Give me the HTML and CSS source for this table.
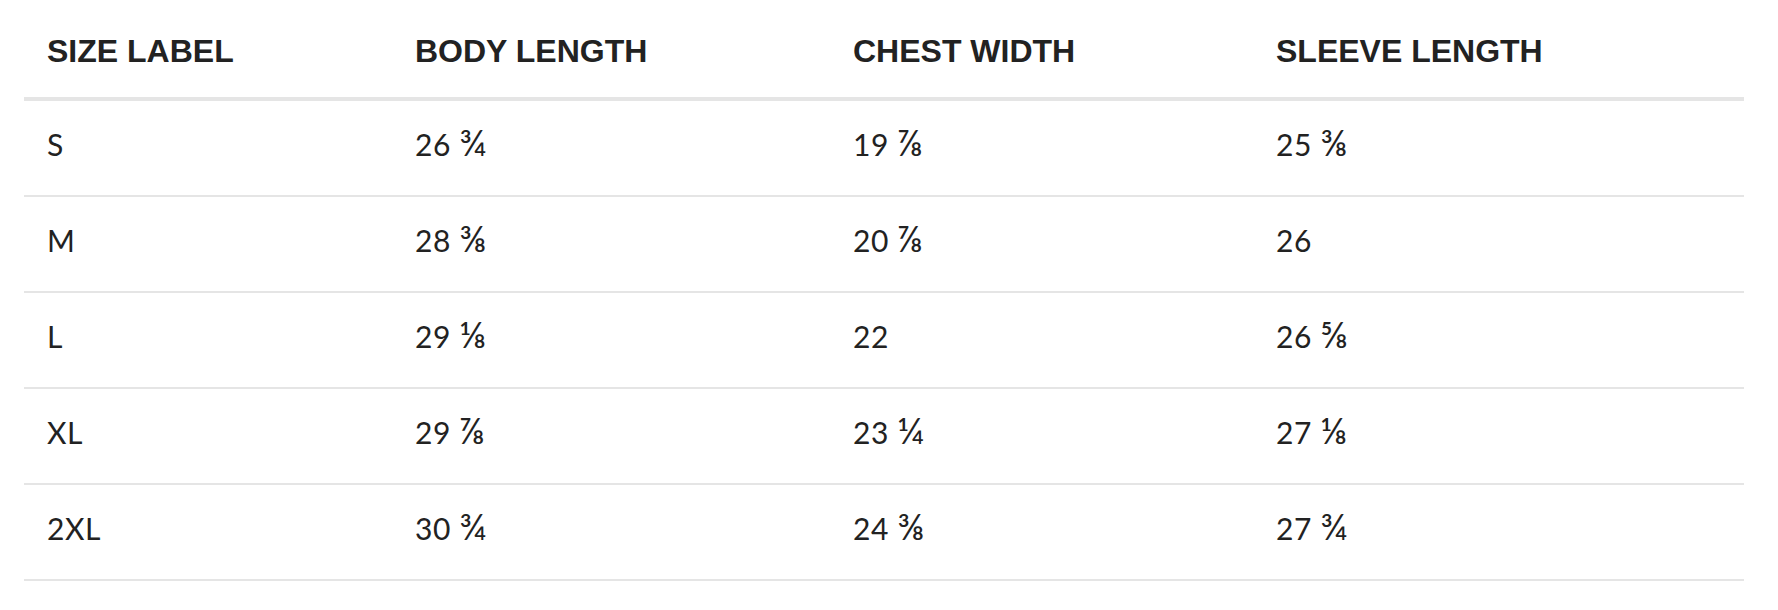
FILE: index.html
```html
<!DOCTYPE html>
<html lang="en">
<head>
<meta charset="utf-8">
<title>Size chart</title>
<link rel="stylesheet" href="styles.css">
</head>
<body>
<div class="wrap">
  <table class="sizes">
    <colgroup>
      <col class="c1"><col class="c2"><col class="c3"><col class="c4">
    </colgroup>
    <thead>
      <tr><th>SIZE LABEL</th><th>BODY LENGTH</th><th>CHEST WIDTH</th><th>SLEEVE LENGTH</th></tr>
    </thead>
    <tbody>
      <tr><td>S</td><td>26 <span class="fr">¾</span></td><td>19 <span class="fr">⅞</span></td><td>25 <span class="fr">⅜</span></td></tr>
      <tr><td>M</td><td>28 <span class="fr">⅜</span></td><td>20 <span class="fr">⅞</span></td><td>26</td></tr>
      <tr><td>L</td><td>29 <span class="fr">⅛</span></td><td>22</td><td>26 <span class="fr">⅝</span></td></tr>
      <tr><td>XL</td><td>29 <span class="fr">⅞</span></td><td>23 <span class="fr">¼</span></td><td>27 <span class="fr">⅛</span></td></tr>
      <tr><td>2XL</td><td>30 <span class="fr">¾</span></td><td>24 <span class="fr">⅜</span></td><td>27 <span class="fr">¾</span></td></tr>
    </tbody>
  </table>
</div>
</body>
</html>
```
FILE: styles.css
```css
html, body {
  margin: 0;
  padding: 0;
  background: #ffffff;
}
.wrap {
  padding: 0 34px 0 24px;
}
.sizes {
  width: 1720px;
  border-collapse: collapse;
  table-layout: fixed;
  color: #222222;
}
.c1 { width: 368px; }
.c2 { width: 438px; }
.c3 { width: 423px; }
.c4 { width: 491px; }
.sizes th {
  font-family: "Liberation Sans", Arial, sans-serif;
  font-weight: 700;
  font-size: 32px;
  line-height: 40px;
  text-align: left;
  padding: 31px 25px 26px 23px;
  border-bottom: 4px solid #e5e5e5;
}
.sizes td {
  font-family: Lato, "Open Sans", sans-serif;
  font-weight: 400;
  font-size: 30px;
  letter-spacing: 0.6px;
  line-height: 36px;
  text-align: left;
  padding: 25px 25px 33px 23px;
  border-bottom: 2px solid #e5e5e5;
}
.fr {
  font-size: 37px;
  line-height: 0;
  letter-spacing: 0;
}
```
